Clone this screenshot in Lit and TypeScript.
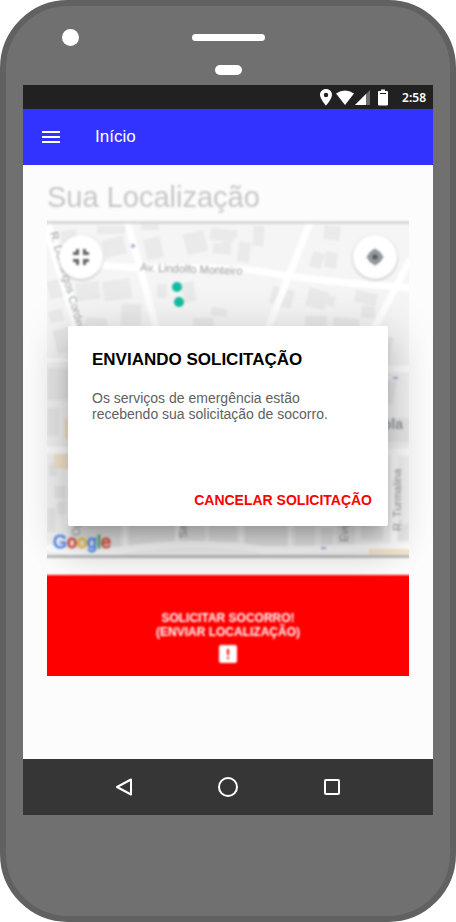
import { LitElement, html, svg, css } from "lit";
import { customElement } from "lit/decorators.js";

/* Building footprints: x, y, width, height, rotation */
const buildings: number[][] = [
  [14, 6, 16, 12, -8], [50, 2, 28, 8, 0], [56, 14, 22, 18, -14], [98, 14, 17, 21, -14],
  [138, 8, 21, 21, -14], [163, 5, 24, 12, 6], [166, 20, 18, 10, 6], [94, 0, 18, 6, 0],
  [174, 6, 16, 8, 0], [174, 18, 10, 12, 0], [191, 18, 12, 20, 6], [206, 2, 11, 20, 4],
  [277, 2, 16, 14, 6], [264, 28, 12, 16, 16], [278, 28, 12, 16, 8], [29, 58, 24, 18, -8],
  [56, 56, 28, 20, -8], [74, 80, 20, 22, 3], [38, 94, 22, 16, 2], [2, 86, 14, 12, -14],
  [1, 56, 14, 18, -14], [110, 60, 10, 14, 4], [136, 58, 12, 20, -10], [146, 94, 20, 16, 0],
  [164, 84, 16, 8, 8], [224, 64, 22, 18, 14], [260, 66, 20, 18, 16], [280, 72, 8, 10, 14],
  [308, 68, 22, 12, 12], [314, 82, 14, 12, 4], [258, 92, 22, 14, 0], [286, 94, 26, 14, 6],
  [8, 104, 20, 24, -14], [0, 144, 22, 32, 0], [0, 184, 12, 28, 0], [2, 240, 8, 12, 0],
  [8, 262, 18, 12, 0], [10, 278, 14, 12, 0], [0, 284, 8, 24, 0], [330, 112, 14, 22, 14],
  [332, 156, 16, 24, 8], [340, 194, 22, 24, 0], [22, 300, 52, 22, 0], [82, 300, 46, 22, 0],
  [132, 300, 26, 20, 0], [162, 300, 28, 18, 0], [198, 300, 42, 22, 0], [248, 300, 20, 22, 0],
  [274, 304, 12, 18, 0], [290, 300, 18, 20, 0], [314, 300, 22, 16, 0], [344, 300, 18, 16, 0],
];

const googleLetters = [
  ["G", "blue"], ["o", "red"], ["o", "yellow"], ["g", "blue"], ["l", "green"], ["e", "red"],
];

@customElement("location-map")
export class LocationMap extends LitElement {
  static styles = css`
    :host { display: block; position: relative; border-top: 3px solid #d8d8d8; border-bottom: 3px solid #bdbdbd; }
    .canvas { display: block; width: 100%; height: 331px; background: #f5f5f5; }
    .building { fill: #eaeaea; }
    .road { fill: none; stroke: #ffffff; stroke-width: 7; }
    .wide { stroke-width: 10; }
    .lane { stroke-width: 3; }
    .sand { fill: #f7e8cf; }
    .person { fill: #12bc9f; }
    .stop { fill: #a9acd8; }
    .label { font: 11px "Liberation Sans", Arial, sans-serif; fill: #959b9b; }
    .place { font-size: 14px; font-weight: 700; fill: #929ca0; }
    .google { font: 18px "Liberation Sans", Arial, sans-serif; stroke-width: 1; }
    .blue { fill: #5b93f5; stroke: #5b93f5; }
    .red { fill: #e4574c; stroke: #e4574c; }
    .yellow { fill: #f5c443; stroke: #f5c443; }
    .green { fill: #4caf6a; stroke: #4caf6a; }
    .round {
      position: absolute; top: 11px; width: 44px; height: 44px; padding: 10px; border: 0;
      border-radius: 50%; background: #fff; box-shadow: 0 1px 3px rgba(0, 0, 0, 0.25);
    }
    .shrink { left: 18px; }
    .locate { right: 18px; }
    .round svg { display: block; width: 24px; height: 24px; }
  `;

  render() {
    return html`
      <svg class="canvas" viewBox="-6 0 374 331" preserveAspectRatio="xMidYMid slice" role="img" aria-label="Mapa da sua localização">
        <g>
          ${buildings.map(([x, y, w, h, r]) => svg`
            <rect class="building" x=${x} y=${y} width=${w} height=${h} transform="rotate(${r} ${x + w / 2} ${y + h / 2})"></rect>`)}
        </g>
        <path class="road wide" d="M-2 -5 L34 112"></path>
        <path class="road" d="M80 -4 L92 40 L114 122 M34 40 L92 44 Q170 42 212 47 Q270 58 370 64"></path>
        <path class="road" d="M264 -4 L214 122 M364 34 L318 122"></path>
        <path class="road lane" d="M-6 136 H30 M-6 225 H30 M78 290 V322 M130 290 V322 M194 290 V322 M243 290 V322 M20 230 V300"></path>
        <path class="road" d="M-6 226 H28 M334 145 H370 M334 228 H370 M-6 322 Q40 334 80 325 Q150 315 220 326 L370 322 M347 228 V320"></path>
        <rect class="sand" x="17" y="194" width="14" height="21"></rect>
        <rect class="sand" x="7" y="230" width="20" height="15"></rect>
        <rect class="sand" x="322" y="325" width="50" height="6"></rect>
        <circle class="stop" cx="86" cy="22" r="2"></circle>
        <rect class="stop" x="346" y="153" width="5" height="2"></rect>
        <rect class="stop" x="274" y="323" width="5" height="2"></rect>
        <circle class="person" cx="130" cy="63" r="5"></circle>
        <circle class="person" cx="132" cy="78" r="5"></circle>
        <text class="label" transform="translate(93 47) rotate(2)">Av. Lindolfo Monteiro</text>
        <text class="label" transform="translate(3 9) rotate(74)">R. Domingos Cordeiro</text>
        <text class="label" transform="translate(354 307) rotate(-90)">R. Turmalina</text>
        <text class="label" transform="translate(301 318) rotate(-90)">Evelyn</text>
        <text class="label" transform="translate(140 314) rotate(-90)">Safira</text>
        <text class="label" transform="translate(33 312) rotate(-90)">Opala</text>
        <text class="label place" x="356" y="205" text-anchor="end">Escola</text>
        <text class="google" x="6" y="324">${googleLetters.map(([l, c]) => svg`<tspan class=${c}>${l}</tspan>`)}</text>
      </svg>
      <button class="round shrink" aria-label="Reduzir mapa">
        <svg viewBox="0 0 24 24" fill="#5f6468"><path d="M4 14h6v6H7v-3H4zM4 10h6V4H7v3H4zM14 20h3v-3h3v-3h-6zM14 4v6h6V7h-3V4z"></path></svg>
      </button>
      <button class="round locate" aria-label="Minha localização">
        <svg viewBox="0 0 24 24"><path d="M12 3l3 3 3 3 3 3-3 3-3 3-3 3-3-3-3-3-3-3 3-3 3-3z" fill="#a4aaad"></path><circle cx="12" cy="12" r="6" fill="none" stroke="#81888c" stroke-width="2"></circle><circle cx="12" cy="12" r="3" fill="#565d61"></circle></svg>
      </button>
    `;
  }
}

@customElement("app-root")
export class AppRoot extends LitElement {
  static styles = css`
    :host { display: block; font-family: "Liberation Sans", Arial, sans-serif; background: #fff; }
    * { box-sizing: border-box; }
    button { font-family: inherit; cursor: pointer; }
    .phone {
      display: flex; flex-direction: column; min-height: 100vh; padding: 0 17px;
      border: 6px solid #616161; border-radius: 68px; background: #707070;
    }
    .top {
      display: grid; grid-template-columns: 1fr 73px 1fr; row-gap: 19px; align-items: center;
      padding: 23px 0 10px;
    }
    .top span { background: #fff; }
    .camera { width: 17px; height: 17px; margin-left: 39px; border-radius: 50%; }
    .speaker { height: 7px; border-radius: 4px; }
    .sensor { grid-column: 2; justify-self: center; width: 27px; height: 10px; border-radius: 5px; }
    .screen { display: flex; flex-direction: column; flex: 1; background: #fcfcfc; }
    .bottom { height: 101px; }
    .status {
      display: flex; align-items: center; justify-content: flex-end; height: 24px; padding-right: 7px;
      background: #212121; color: #fff; font: 600 12px "Noto Sans", sans-serif;
    }
    .status svg { display: block; height: 18px; }
    .status time { margin-left: 14px; }
    .bar {
      display: flex; align-items: center; gap: 32px; height: 56px; padding: 0 16px;
      background: #3333ff; color: #fff;
    }
    .bar h1 { margin: 0; font-size: 17px; font-weight: 400; }
    .icon { width: 24px; height: 24px; padding: 0; border: 0; background: none; }
    .icon svg { display: block; }
    .content { position: relative; flex: 1; }
    .clip { display: flow-root; margin: 0 24px; overflow: clip; }
    .behind { margin: 0 -6px -6px; filter: blur(1px); }
    .heading { margin: 0; padding: 15px 6px 7px; font-size: 29px; line-height: 34px; font-weight: 400; color: #c6c6c6; }
    .sos {
      display: flex; flex-direction: column; align-items: center; gap: 3px; width: 100%; height: 107px;
      margin-top: 17px; padding: 36px 0 0; border: 0; background: #f00; color: #fff;
      font-size: 12px; line-height: 14px; font-weight: 700;
    }
    .overlay {
      position: absolute; inset: 0; display: flex; justify-content: center; align-items: flex-start;
      padding: 161px 24px 0;
    }
    .dialog {
      display: flex; flex-direction: column; width: 100%; max-width: 320px; min-height: 200px;
      border-radius: 2px; background: #fff;
      box-shadow: 0 11px 15px -7px rgba(0, 0, 0, 0.2), 0 24px 38px 3px rgba(0, 0, 0, 0.14), 0 9px 46px 8px rgba(0, 0, 0, 0.12);
    }
    .dialog h2 { margin: 0; padding: 24px 24px 0; font-size: 17px; line-height: 20px; color: #000; }
    .dialog p { margin: 0; padding: 20px 24px; font-size: 14px; line-height: 16px; color: #616161; }
    .actions { display: flex; justify-content: flex-end; margin-top: auto; padding: 8px; }
    .cancel { height: 36px; padding: 0 8px; border: 0; background: none; color: #f00; font-size: 14px; font-weight: 700; }
    .nav { display: flex; align-items: center; justify-content: center; gap: 80px; height: 56px; background: #363636; }
  `;

  render() {
    return html`
      <div class="phone">
        <div class="top"><span class="camera"></span><span class="speaker"></span><span class="sensor"></span></div>
        <div class="screen">
          <div class="status">
            <svg width="69" height="18" viewBox="0 0 69 18" fill="#fff" aria-hidden="true">
              <path fill-rule="evenodd" d="M7 1C3.600 1 1 3.500 1 6.700 1 11 7 17.500 7 17.500S13 11 13 6.700C13 3.500 10.400 1 7 1zm0 3.800a2.200 2.200 0 1 1 0 4.400 2.200 2.200 0 0 1 0-4.400z"></path>
              <path d="M17 5.500Q26 -.500 35 5.500L26 17z"></path>
              <path d="M51 2v15H36z" opacity=".35"></path><path d="M47 6v11H36z"></path>
              <path fill-rule="evenodd" d="M62 1.500h4V3h2q1 0 1 1v12.500q0 1-1 1h-8q-1 0-1-1V4q0-1 1-1h2zM61 5v1h6V5z"></path>
            </svg>
            <time>2:58</time>
          </div>
          <header class="bar">
            <button class="icon" aria-label="Menu">
              <svg width="24" height="24" fill="#fff"><path d="M3 6h18v2H3zM3 11h18v2H3zM3 16h18v2H3z"></path></svg>
            </button>
            <h1>Início</h1>
          </header>
          <main class="content">
            <div class="clip">
              <div class="behind">
                <h2 class="heading">Sua Localização</h2>
                <location-map></location-map>
                <button class="sos">
                  <span>SOLICITAR SOCORRO!<br />(ENVIAR LOCALIZAÇÃO)</span>
                  <svg width="24" height="24" aria-hidden="true"><rect x="3" y="3" width="18" height="18" rx="2" fill="#fff"></rect><path d="M11 7h2v6h-2zM11 15h2v2h-2z" fill="#f00"></path></svg>
                </button>
              </div>
            </div>
            <div class="overlay">
              <section class="dialog" role="dialog" aria-modal="true" aria-labelledby="dialog-title">
                <h2 id="dialog-title">ENVIANDO SOLICITAÇÃO</h2>
                <p>Os serviços de emergência estão recebendo sua solicitação de socorro.</p>
                <div class="actions"><button class="cancel">CANCELAR SOLICITAÇÃO</button></div>
              </section>
            </div>
          </main>
          <nav class="nav" aria-label="Sistema">
            <button class="icon" aria-label="Voltar"><svg width="24" height="24" fill="none" stroke="#fff" stroke-width="2" stroke-linejoin="round"><path d="M19 4.500v15L5 12z"></path></svg></button>
            <button class="icon" aria-label="Tela inicial"><svg width="24" height="24" fill="none" stroke="#fff" stroke-width="2"><circle cx="12" cy="12" r="9"></circle></svg></button>
            <button class="icon" aria-label="Recentes"><svg width="24" height="24" fill="none" stroke="#fff" stroke-width="2"><rect x="5" y="5" width="14" height="14" rx="1"></rect></svg></button>
          </nav>
        </div>
        <div class="bottom"></div>
      </div>
    `;
  }
}
